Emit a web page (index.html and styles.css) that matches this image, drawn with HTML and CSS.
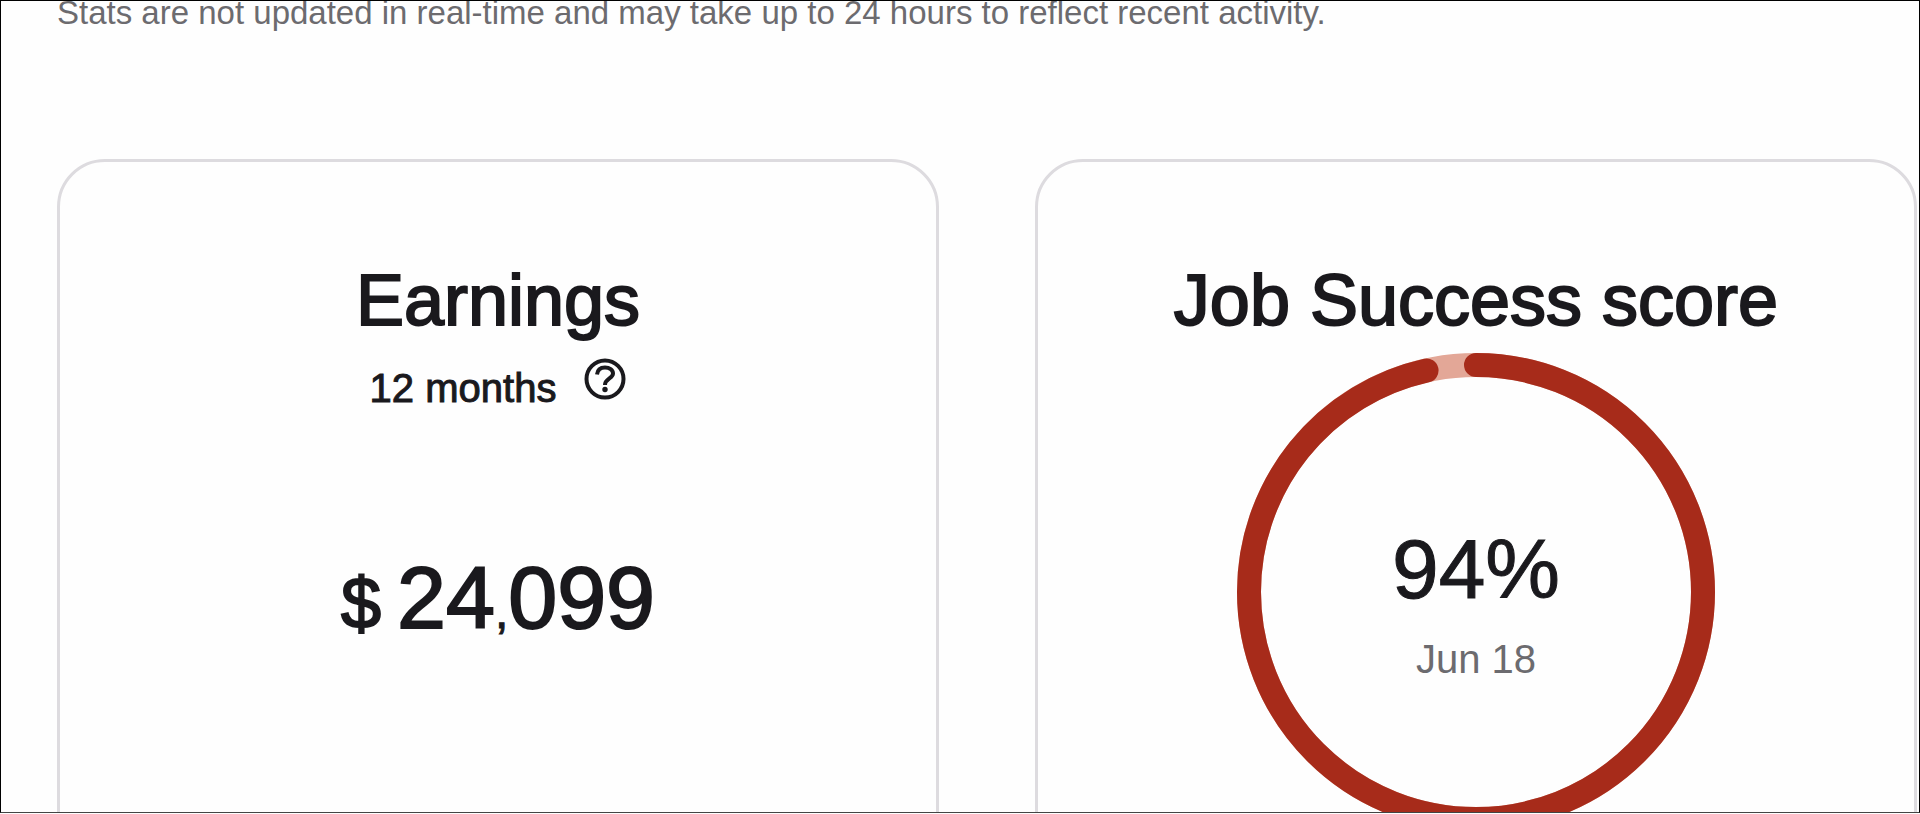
FILE: index.html
```html
<!DOCTYPE html>
<html lang="en">
<head>
    <meta charset="UTF-8">
    <meta name="viewport" content="width=device-width, initial-scale=1.0">
    <title>My Stats</title>
    <link rel="stylesheet" href="styles.css">
</head>
<body>
    <main class="stats-page">
        <p class="stats-note">Stats are not updated in real-time and may take up to 24 hours to reflect recent activity.</p>

        <div class="stats-cards">
            <section class="card">
                <h2 class="card-title">Earnings</h2>
                <div class="period">
                    <span class="period-text">12 months</span>
                    <button type="button" class="help-button" aria-label="About earnings">
                        <svg class="help-icon" viewBox="0 0 42 42" fill="none" stroke="currentColor" stroke-width="4">
                            <circle cx="21" cy="21" r="18.500"/>
                            <path d="M13 16.500C13.500 12 16.500 9.500 21 9.500C25.500 9.500 29 12 29 15.500C29 20.500 21 20.500 21 27"/>
                            <circle cx="21" cy="31.500" r="2.700" fill="currentColor" stroke="none"/>
                        </svg>
                    </button>
                </div>
                <p class="amount"><span class="currency">$</span><span>24<span class="comma">,</span>099</span></p>
            </section>

            <section class="card">
                <h2 class="card-title">Job Success score</h2>
                <div class="score">
                    <svg class="score-ring" viewBox="0 0 478 478" fill="none" stroke-width="24">
                        <circle class="ring-track" cx="239" cy="239" r="227"/>
                        <circle class="ring-value" cx="239" cy="239" r="227" pathLength="1000" stroke-dasharray="965 1000" transform="rotate(-90 239 239)"/>
                    </svg>
                    <div class="score-label">
                        <span class="score-number">94%</span>
                        <span class="score-date">Jun 18</span>
                    </div>
                </div>
            </section>
        </div>
    </main>
</body>
</html>
```
FILE: styles.css
```css
:root {
    --text: #1a191d;
    --text-light: #6c6b6f;
    --card-border: #dddbdf;
    --ring: #a72b1a;
    --ring-track: #e3a797;
}

* {
    box-sizing: border-box;
}

body {
    margin: 0;
    background-color: #fefefe;
    font-family: "Liberation Sans", Arial, sans-serif;
    color: var(--text);
}

.stats-page {
    height: calc(100vh - 1px);
    padding: 0 2px 0 56px;
    border: 1px solid #000;
    border-bottom-color: #444;
    overflow: hidden;
}

.stats-note {
    margin: -8px 0 126px;
    font-size: 33px;
    line-height: 40px;
    color: var(--text-light);
}

/* Cards */
.stats-cards {
    display: grid;
    grid-template-columns: 1fr 1fr;
    gap: 96px;
}

.card {
    display: flex;
    flex-direction: column;
    align-items: center;
    padding: 94px 48px 96px;
    border: 3px solid var(--card-border);
    border-radius: 48px;
}

.card-title {
    margin: 0;
    font-size: 72px;
    font-weight: 400;
    line-height: 88px;
    -webkit-text-stroke: 2px var(--text);
}

/* Earnings */
.period {
    display: flex;
    align-items: flex-end;
    gap: 28px;
    margin-top: 14px;
}

.period-text {
    font-size: 40px;
    line-height: 48px;
    -webkit-text-stroke: 1px var(--text);
}

.help-button {
    display: flex;
    margin: 0 0 12px;
    padding: 0;
    border: none;
    background: none;
    color: var(--text);
    cursor: pointer;
}

.help-icon {
    width: 42px;
    height: 42px;
}

.amount {
    display: flex;
    align-items: baseline;
    gap: 16px;
    margin: 138px 0 0;
    font-size: 88px;
    line-height: 96px;
    -webkit-text-stroke: 2px var(--text);
}

.currency {
    font-size: 72px;
}

.comma {
    font-size: 48px;
    -webkit-text-stroke: 1px var(--text);
}

/* Job Success score */
.score {
    display: grid;
    place-items: center;
    margin-top: 9px;
}

.score-ring,
.score-label {
    grid-area: 1 / 1;
}

.score-ring {
    width: 478px;
    height: 478px;
}

.ring-track {
    stroke: var(--ring-track);
}

.ring-value {
    stroke: var(--ring);
    stroke-linecap: round;
}

.score-label {
    display: flex;
    flex-direction: column;
    align-items: center;
    gap: 18px;
    padding-top: 20px;
}

.score-number {
    font-size: 84px;
    line-height: 96px;
    -webkit-text-stroke: 1px var(--text);
}

.score-date {
    font-size: 40px;
    line-height: 48px;
    color: var(--text-light);
}
```
